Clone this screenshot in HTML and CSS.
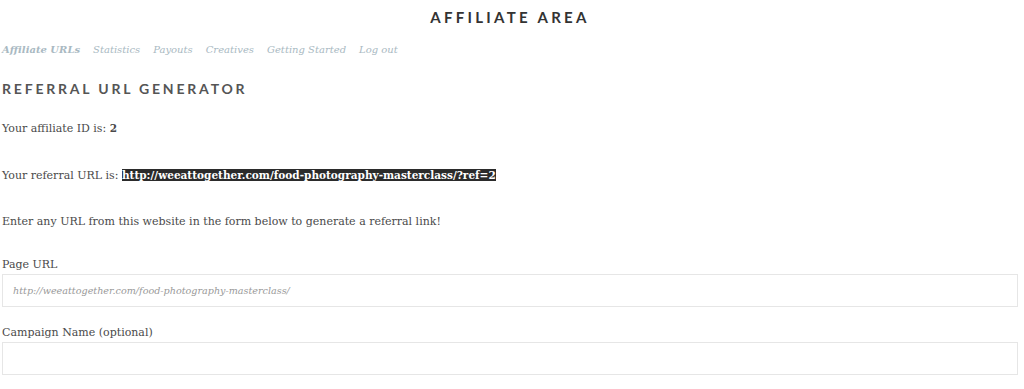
FILE: index.html
```html
<!DOCTYPE html>
<html lang="en">
<head>
  <meta charset="UTF-8">
  <meta name="viewport" content="width=device-width, initial-scale=1.0">
  <title>Affiliate Area</title>
  <link rel="stylesheet" href="styles.css">
</head>
<body>
  <div class="page">
    <h1 class="page-title">Affiliate Area</h1>

    <!-- Dashboard tabs -->
    <ul class="tabs">
      <li class="tab active">Affiliate URLs</li>
      <li class="tab">Statistics</li>
      <li class="tab">Payouts</li>
      <li class="tab">Creatives</li>
      <li class="tab">Getting Started</li>
      <li class="tab">Log out</li>
    </ul>

    <h2 class="section-title">Referral URL Generator</h2>

    <p class="line">Your affiliate ID is: <strong>2</strong></p>
    <p class="line">Your referral URL is: <strong class="selected">http://weeattogether.com/food-photography-masterclass/?ref=2</strong></p>
    <p class="line">Enter any URL from this website in the form below to generate a referral link!</p>

    <!-- Generator form -->
    <form class="generator">
      <div class="field">
        <label for="page-url">Page URL</label>
        <input type="text" id="page-url" placeholder="http://weeattogether.com/food-photography-masterclass/">
      </div>
      <div class="field">
        <label for="campaign">Campaign Name (optional)</label>
        <input type="text" id="campaign">
      </div>
    </form>
  </div>
</body>
</html>
```

FILE: styles.css
```css
body {
  margin: 0;
  padding: 0;
  background: #fff;
  font-family: "DejaVu Serif", "Liberation Serif", serif;
  color: #4a4a4a;
}

.page {
  padding: 0 6px 0 2px;
}

.page-title {
  margin: 0;
  padding-top: 8px;
  text-align: center;
  font-family: Lato, sans-serif;
  font-weight: 700;
  font-size: 15px;
  letter-spacing: 3.3px;
  text-transform: uppercase;
  color: #333;
  line-height: 18px;
}

.tabs {
  list-style: none;
  display: flex;
  gap: 13px;
  margin: 16px 0 0;
  padding: 0;
}

.tab {
  font-style: italic;
  font-size: 10px;
  line-height: 16px;
  color: #a9b9c2;
}

.tab.active {
  font-weight: bold;
}

.section-title {
  margin: 22px 0 0;
  font-family: Lato, sans-serif;
  font-weight: 700;
  font-size: 14px;
  letter-spacing: 2.8px;
  text-transform: uppercase;
  color: #555;
  line-height: 18px;
}

.line {
  margin: 0;
  font-size: 11px;
  line-height: 18px;
}

.line strong {
  font-size: 10.5px;
}

.section-title + .line {
  margin-top: 21px;
}

.line + .line {
  margin-top: 28px;
}

.selected {
  background: #2b2b2b;
  color: #fff;
}

.generator {
  margin-top: 25px;
}

.field {
  display: flex;
  flex-direction: column;
}

.field + .field {
  margin-top: 17px;
}

label {
  font-size: 11px;
  line-height: 18px;
  margin-bottom: 0;
}

input {
  box-sizing: border-box;
  height: 33px;
  border: 1px solid #e6e6e6;
  padding: 0 10px;
  font-family: "DejaVu Serif", serif;
  font-style: italic;
  font-size: 9.6px;
  color: #555;
}

input::placeholder {
  color: #999;
}
```
